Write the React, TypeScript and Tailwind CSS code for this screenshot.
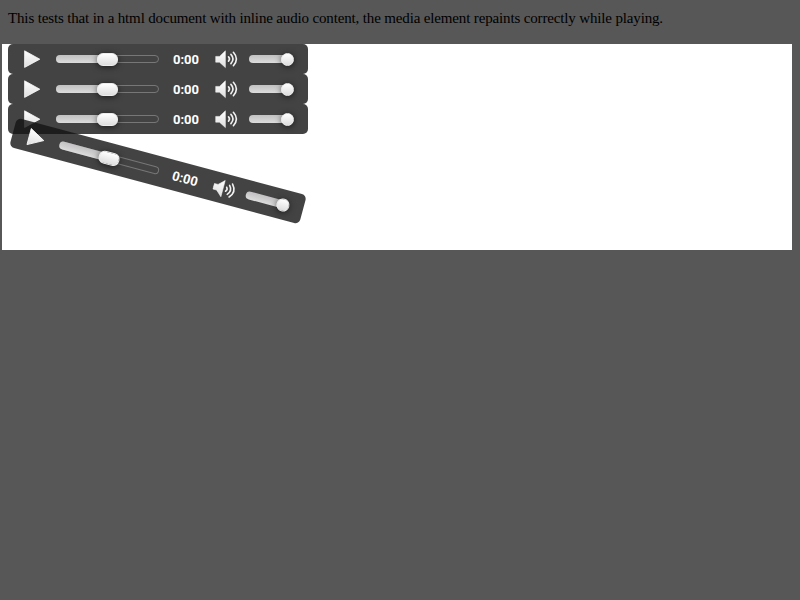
import React from "react";

function Player({ className = "" }: { className?: string }) {
  return (
    <div className={`flex h-[30px] w-[300px] items-center rounded-[5px] bg-[#141414]/80 ${className}`}>
      <svg className="ml-[15px] h-[20px] w-[18px] shrink-0" viewBox="0 0 18 20">
        <defs>
          <linearGradient id="face" x1="0" y1="0" x2="0" y2="1">
            <stop offset="0" stopColor="#ffffff" />
            <stop offset="1" stopColor="#dedede" />
          </linearGradient>
        </defs>
        <path d="M1.6 1.8L16.8 10.2L1.6 18.4Z" fill="url(#face)" stroke="#fafafa" strokeWidth=".8" />
      </svg>
      <div className="relative ml-[15px] h-2 w-[103px] shrink-0 rounded-full border border-[#777]">
        <div className="absolute -left-px -top-px h-2 w-[52px] rounded-l-[4px] bg-linear-to-b from-[#c2c0c2] to-[#dcdcdc]" />
        <div className="absolute left-[40px] -top-[3px] h-[13px] w-[21px] rounded-[6px] border border-[#ececec] bg-linear-to-b from-white to-[#dddddd] shadow-[0_1px_6px_rgba(0,0,0,0.6)]" />
      </div>
      <div className="ml-[14px] w-[28px] shrink-0 whitespace-nowrap pt-px font-['Roboto',sans-serif] text-[13px] font-bold leading-[30px] text-white">
        0:00
      </div>
      <svg className="ml-[14px] h-[20px] w-[24px] shrink-0" viewBox="0 0 24 20">
        <path d="M.7 7.4H4.5L10.4 1.8V18.6L4.5 13.2H.7Z" fill="url(#face)" stroke="#fafafa" strokeWidth=".5" />
        <g fill="none" stroke="#f0f0f0" strokeWidth="1.6" strokeLinecap="round">
          <path d="M13.5 7.9Q15.5 10 13.5 12.1" />
          <path d="M15.9 5.4Q20.1 10 15.9 14.6" />
          <path d="M18.4 3.3Q24.4 10 18.4 16.7" />
        </g>
      </svg>
      <div className="relative ml-[10px] h-2 w-[42px] shrink-0 rounded-[4px] bg-linear-to-b from-[#c2c0c2] to-[#dcdcdc]">
        <div className="absolute left-[32px] -top-[2px] h-[13px] w-[13px] rounded-full border border-[#ececec] bg-linear-to-b from-white to-[#dddddd] shadow-[0_1px_6px_rgba(0,0,0,0.6)]" />
      </div>
    </div>
  );
}

export default function App() {
  return (
    <main className="h-[600px] w-[800px] overflow-hidden bg-[#575757]">
      <p className="h-[44px] whitespace-nowrap pl-2 pt-[9px] font-['Liberation_Serif',serif] text-[15px] leading-[18px] tracking-[-0.15px] text-black">
        This tests that in a html document with inline audio content, the media element repaints correctly while playing.
      </p>
      <section className="ml-[2px] h-[206px] w-[790px] bg-white pl-[6px]">
        <Player />
        <Player />
        <Player />
        <Player className="mt-[22px] rotate-15" />
      </section>
    </main>
  );
}
